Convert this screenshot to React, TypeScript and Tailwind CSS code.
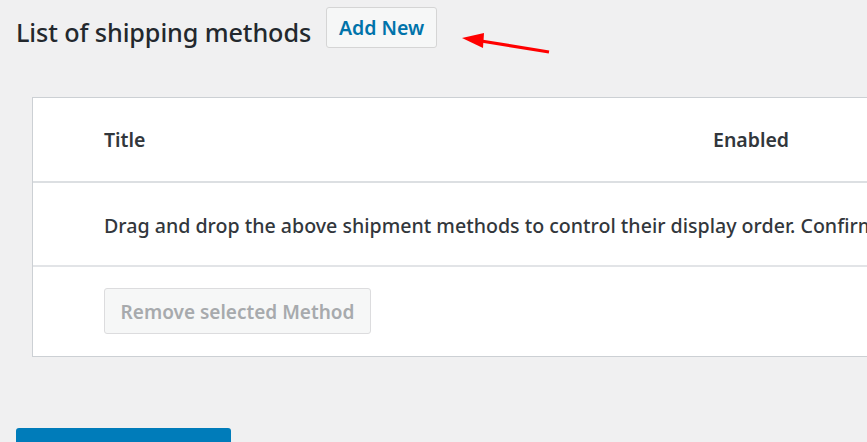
export default function App() {
  return (
    <div className="relative w-[867px] h-[442px] overflow-hidden bg-[#f0f0f1] font-['Noto_Sans',sans-serif] text-[#23282d]">
      {/* page heading */}
      <div className="flex items-start pl-4 pt-[7px]">
        <h1 className="mt-[10px] text-[25.2px] leading-[30px] font-medium tracking-[-0.1px]">
          List of shipping methods
        </h1>
        <button className="ml-[15px] h-[41px] w-[111px] rounded-[3px] border border-[#d5d5d5] bg-[#f6f7f7] text-[19.5px] font-semibold text-[#0073aa]">
          Add New
        </button>
      </div>

      {/* table */}
      <div className="ml-8 mt-[49px] w-[900px] border border-[#ccd0d4] bg-white text-[19px]">
        <div className="flex h-[83px] items-center pl-[71px] text-[19.5px] font-semibold text-[#32373c]">
          <span className="w-[609px]">Title</span>
          <span>Enabled</span>
        </div>
        <div className="flex h-[84px] items-center border-t-2 border-[#dcdfe2] pt-[3px] pl-[71px] text-[19.6px] font-medium text-[#32373c] whitespace-nowrap">
          Drag and drop the above shipment methods to control their display order. Confirm
        </div>
        <div className="border-t-2 border-[#e2e4e7] pt-[21px] pb-[22px] pl-[71px]">
          <button className="h-[46px] w-[267px] rounded-[3px] border border-[#dcdcde] bg-[#f6f7f7] pt-[2px] text-[19px] font-semibold text-[#a7aaad]">
            Remove selected Method
          </button>
        </div>
      </div>

      {/* save button */}
      <div className="ml-4 mt-[71px] h-[40px] w-[215px] rounded-t-[3px] bg-[#007cba]" />

      {/* annotation arrow */}
      <svg className="absolute left-0 top-0" width="867" height="442">
        <line x1="549" y1="52" x2="478" y2="40.5" stroke="#ff0000" strokeWidth="3.2" />
        <polygon points="462,38 484,33 483,48" fill="#ff0000" />
      </svg>
    </div>
  )
}
